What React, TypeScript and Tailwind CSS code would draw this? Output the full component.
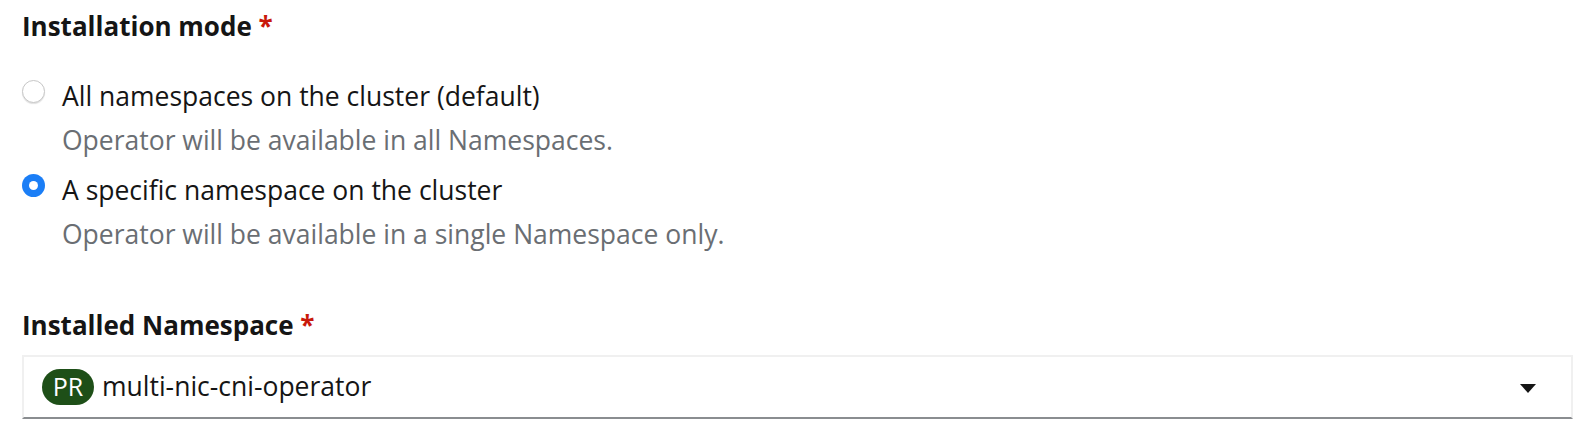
import { useState } from 'react';

const modes = [
  {
    id: 'all',
    label: 'All namespaces on the cluster (default)',
    description: 'Operator will be available in all Namespaces.',
  },
  {
    id: 'single',
    label: 'A specific namespace on the cluster',
    description: 'Operator will be available in a single Namespace only.',
  },
];

function Radio({ checked }: { checked: boolean }) {
  if (checked) {
    return (
      <span className="mt-[6px] flex h-[23px] w-[23px] shrink-0 items-center justify-center rounded-full bg-[#1b7ef6]">
        <span className="h-[9px] w-[9px] rounded-full bg-white" />
      </span>
    );
  }
  return (
    <span className="mt-[6px] h-[23px] w-[23px] shrink-0 rounded-full border border-[#c7c7c7] bg-white shadow-[0_1px_1px_rgba(0,0,0,0.12)]" />
  );
}

export default function App() {
  const [mode, setMode] = useState('single');

  return (
    <div className="min-h-[448px] bg-white pl-[22px] pr-[23px] pt-[6px] text-[#151515] [font-family:'Open_Sans',sans-serif]">
      <div className="text-[26px] font-bold leading-[40px]">
        Installation mode <span className="text-[#c9190b]">*</span>
      </div>

      <div className="mt-[28px] flex flex-col gap-[6px]">
        {modes.map((m) => (
          <label key={m.id} className="flex cursor-pointer gap-[17px]" onClick={() => setMode(m.id)}>
            <Radio checked={mode === m.id} />
            <div className="flex flex-col">
              <span className="text-[26.5px] leading-[44px]">{m.label}</span>
              <span className="text-[26.5px] leading-[44px] text-[#6a6e73]">{m.description}</span>
            </div>
          </label>
        ))}
      </div>

      <div className="mt-[49px] text-[26px] font-bold leading-[40px]">
        Installed Namespace <span className="text-[#c9190b]">*</span>
      </div>

      <div className="mt-[10px] flex h-[64px] items-center border-2 border-[#f0f0f0] border-b-[#8a8d90] pl-[18px] pr-[35px]">
        <span className="flex h-[36px] w-[52px] items-center justify-center rounded-full bg-[#1e4f18] text-[25px] text-white">
          PR
        </span>
        <span className="ml-[8px] flex-1 text-[26.5px]">multi-nic-cni-operator</span>
        <svg width="16" height="10" viewBox="0 0 16 10" className="mt-[4px]">
          <path d="M0 0h16L8 9z" fill="#151515" />
        </svg>
      </div>
    </div>
  );
}
